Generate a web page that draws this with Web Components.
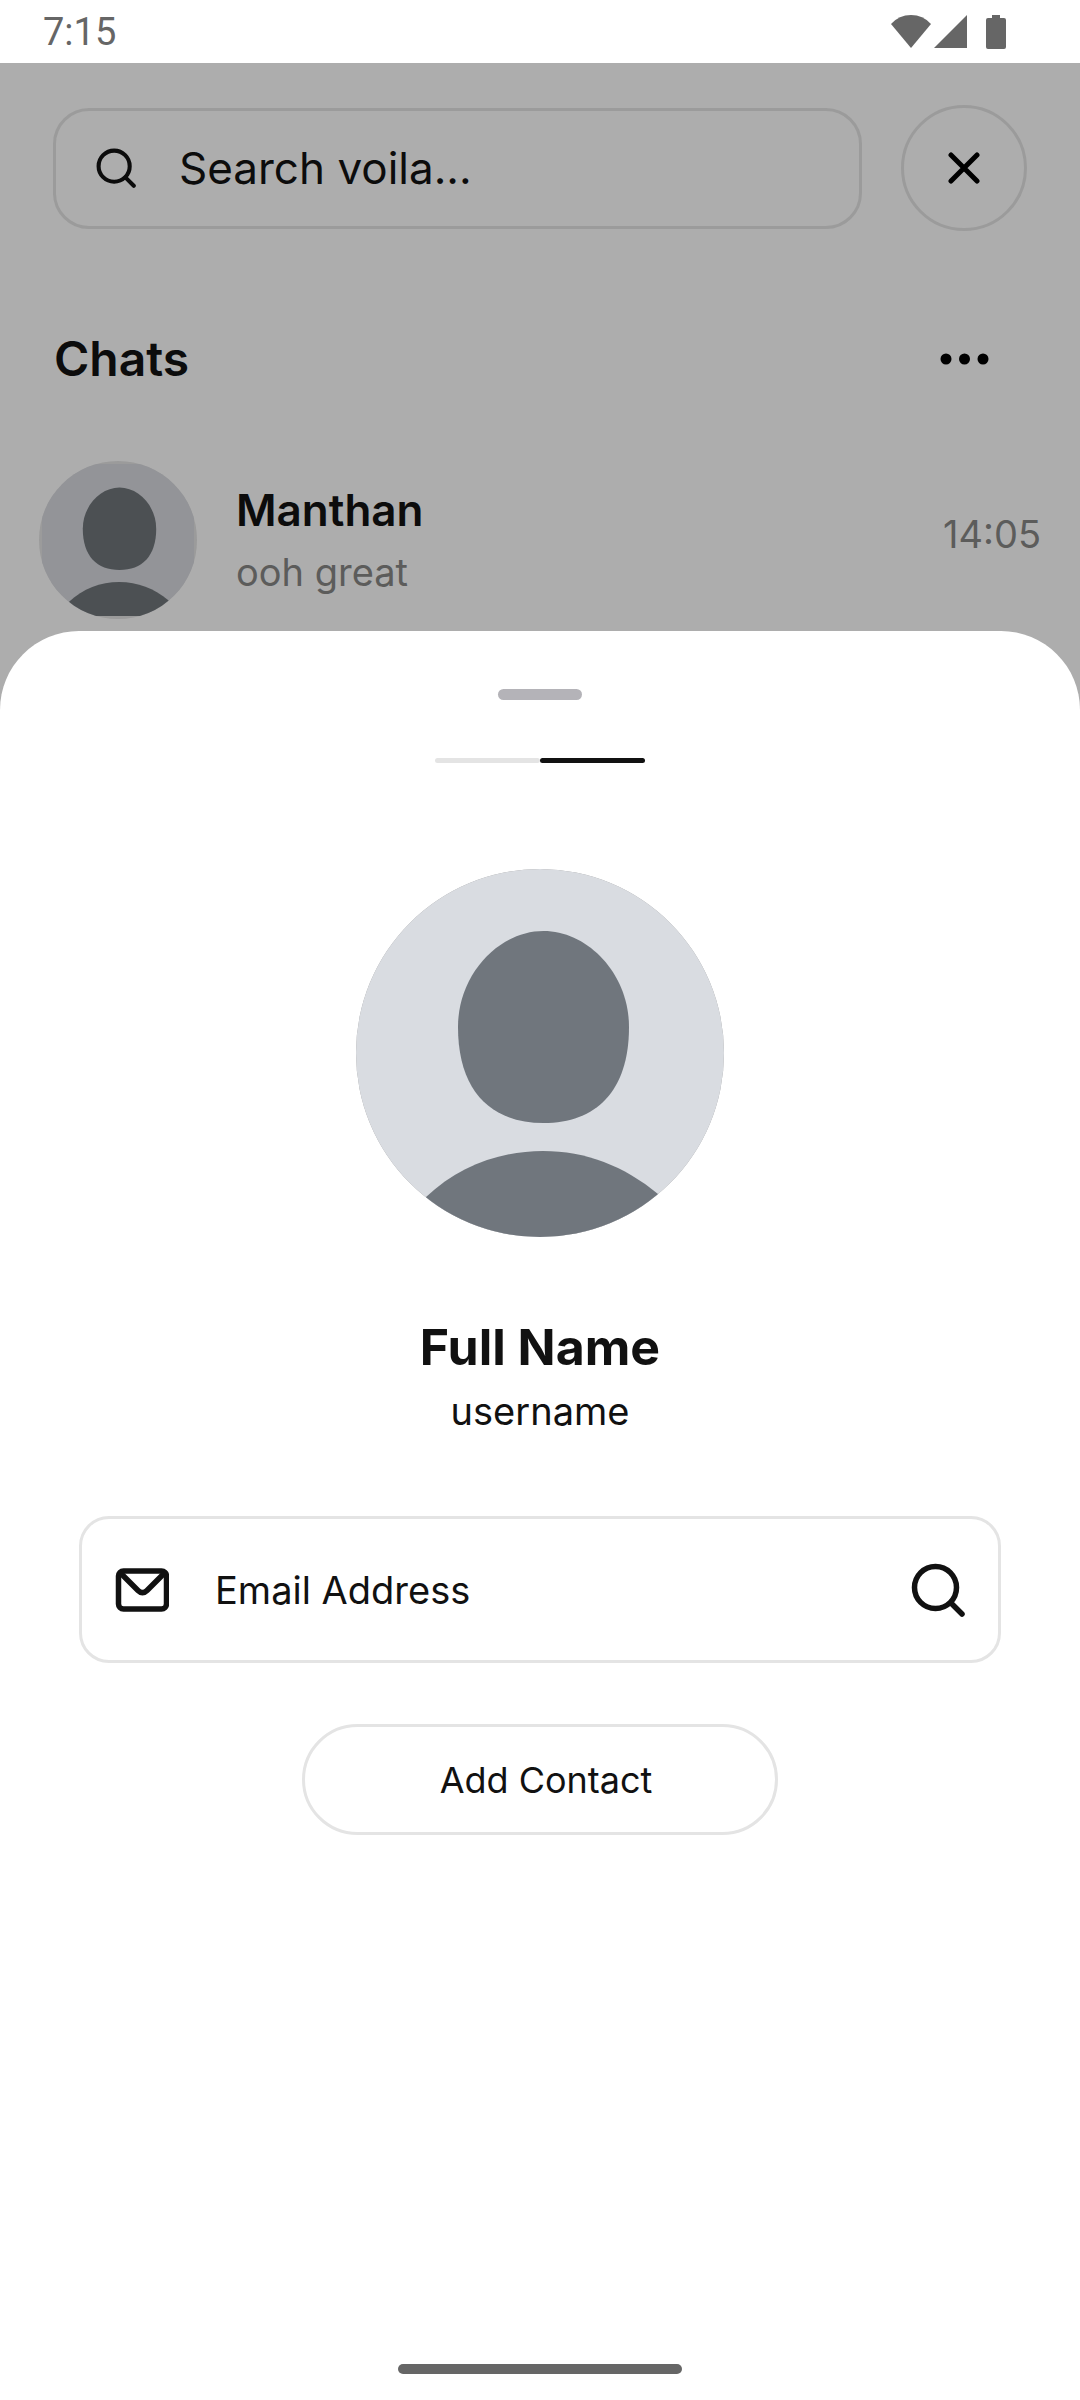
<!DOCTYPE html>
<html lang="en">
<head>
<meta charset="utf-8">
<meta name="viewport" content="width=device-width, initial-scale=1">
<title>Voila chats</title>
<style>
  body { margin: 0; font-family: Inter, "Liberation Sans", sans-serif; color: #111; background: #adadad; }
</style>
</head>
<body>
<voila-app></voila-app>
<script>
const define = (name, html) => {
  const template = document.createElement('template');
  template.innerHTML = html;
  customElements.define(name, class extends HTMLElement {
    constructor() {
      super();
      this.attachShadow({ mode: 'open' }).append(template.content.cloneNode(true));
    }
  });
};

define('status-bar', `
<style>
  :host { display: flex; align-items: center; justify-content: space-between; height: 63px; padding: 0 74px 0 43px; background: #fff; color: #666; box-sizing: border-box; }
  time { font: 38px/60px Roboto, sans-serif; }
  svg { display: block; }
</style>
<time>7:15</time>
<svg width="116" height="36" viewBox="0 0 116 36" fill="#666" aria-hidden="true">
  <path d="M1 10Q9 1 21 1T41 10L21 34Z"/>
  <path d="M44 34L77 1V34Z"/>
  <path d="M102 1h8v3h4q2 0 2 2v27q0 2-2 2h-16q-2 0-2-2v-27q0-2 2-2h4z"/>
</svg>`);

define('search-icon', `
<style>
  :host { display: block; flex: none; width: 40px; height: 40px; }
  svg { display: block; width: 100%; height: 100%; }
</style>
<svg viewBox="0 0 54 54" fill="none" stroke="currentColor" stroke-width="5.500" stroke-linecap="round" aria-hidden="true">
  <circle cx="24.500" cy="24.500" r="21"/><path d="M40 40L51 51"/>
</svg>`);

define('person-avatar', `
<style>
  :host { display: block; flex: none; box-sizing: border-box; border-radius: 50%; overflow: hidden; background: #9b9b9b; color: var(--avatar-fore, #70767d); }
  svg { display: block; width: 100%; height: 100%; background: var(--avatar-back, #d9dce1); clip-path: inset(var(--avatar-ring, 0px)); }
</style>
<svg viewBox="0 0 368 368" fill="currentColor" role="img" aria-label="Profile picture">
  <path d="M187.500 62C232 62 273 105 273 158C273 222 240 254 187.500 254C135 254 102 222 102 158C102 105 143 62 187.500 62Z"/>
  <path d="M70 328C102 298 143 282 187 282C230 282 268 297 302 325L302 368H70Z"/>
</svg>`);

define('search-header', `
<style>
  :host { display: flex; align-items: center; gap: 39px; padding: 42px 53px 0; }
  label { flex: 1; min-width: 0; display: flex; align-items: center; gap: 43px; height: 121px; box-sizing: border-box; padding: 0 40px; border: 3px solid #9b9b9b; border-radius: 36px; color: #0c0c0c; }
  input { flex: 1; min-width: 0; padding: 0; border: 0; outline: 0; background: none; font: inherit; font-size: 44px; line-height: 56px; color: #0c0c0c; }
  input::placeholder { color: #0c0c0c; opacity: 1; }
  button { flex: none; display: grid; place-items: center; width: 126px; height: 126px; padding: 0; border: 3px solid #9b9b9b; border-radius: 50%; background: none; color: #000; }
</style>
<label><search-icon></search-icon><input type="search" aria-label="Search voila" placeholder="Search voila..."></label>
<button type="button" aria-label="Close">
  <svg width="32" height="32" viewBox="0 0 32 32" fill="none" stroke="currentColor" stroke-width="5" stroke-linecap="round"><path d="M3 3L29 29M29 3L3 29"/></svg>
</button>`);

define('section-bar', `
<style>
  :host { display: flex; align-items: center; justify-content: space-between; padding: 98px 91px 72px 54px; }
  h2 { margin: 0; font-size: 48px; line-height: 60px; font-weight: 600; color: #0c0c0c; }
  button { padding: 0; border: 0; background: none; color: #000; }
  svg { display: block; }
</style>
<h2><slot></slot></h2>
<button type="button" aria-label="More options">
  <svg width="50" height="12" viewBox="0 0 50 12" fill="currentColor"><circle cx="7" cy="6" r="5.500"/><circle cx="25.500" cy="6" r="5.500"/><circle cx="44" cy="6" r="5.500"/></svg>
</button>`);

define('chat-row', `
<style>
  :host { display: flex; align-items: center; gap: 39px; padding: 0 39px; }
  person-avatar { width: 158px; height: 158px; --avatar-back: #939498; --avatar-fore: #4c5053; --avatar-ring: 3px; }
  .texts { flex: 1; display: grid; gap: 12px; }
  .name { font-size: 44px; line-height: 52px; font-weight: 600; color: #0c0c0c; }
  .preview, .time { font-size: 38px; line-height: 48px; color: #5c5c5b; }
  .time { padding-bottom: 12px; }
</style>
<person-avatar></person-avatar>
<div class="texts"><div class="name"><slot name="name"></slot></div><div class="preview"><slot></slot></div></div>
<div class="time"><slot name="time"></slot></div>`);

define('step-tabs', `
<style>
  :host { display: flex; }
  i { width: 105px; height: 5px; border-radius: 3px; background: #e4e4e4; }
  i.on { background: #111; }
</style>
<i></i><i class="on"></i>`);

define('email-field', `
<style>
  :host { display: block; }
  label { display: flex; align-items: center; height: 147px; box-sizing: border-box; padding: 0 33px; border: 3px solid #e4e4e4; border-radius: 30px; color: #111; }
  svg { flex: none; display: block; }
  input { flex: 1; min-width: 0; margin: 0 46px; padding: 0; border: 0; outline: 0; background: none; font: inherit; font-size: 38px; line-height: 48px; color: #111; }
  input::placeholder { color: #111; opacity: 1; }
  button { flex: none; padding: 0; border: 0; background: none; color: inherit; }
  search-icon { width: 54px; height: 54px; }
</style>
<label>
  <svg width="54" height="44" viewBox="0 0 54 44" fill="none" stroke="currentColor" stroke-width="5.500" stroke-linejoin="round" aria-hidden="true">
    <rect x="3.500" y="3" width="48" height="38" rx="5"/><path d="M5.500 5L23 22.500Q27.500 27 32 22.500L49.500 5"/>
  </svg>
  <input type="email" aria-label="Email Address" placeholder="Email Address">
  <button type="button" aria-label="Find contact"><search-icon></search-icon></button>
</label>`);

define('pill-button', `
<style>
  :host { display: block; }
  button { width: 476px; max-width: 100%; height: 111px; padding: 0 0 0 12px; border: 3px solid #e4e4e4; border-radius: 56px; background: none; font: inherit; font-size: 36px; line-height: 48px; color: #111; }
</style>
<button type="button"><slot></slot></button>`);

define('contact-sheet', `
<style>
  :host { display: flex; flex-direction: column; align-items: center; box-sizing: border-box; padding: 58px 79px 26px; background: #fff; border-radius: 79px 79px 0 0; }
  .handle { width: 84px; height: 11px; border-radius: 6px; background: #b4b3b8; }
  step-tabs { margin: 58px 0 106px; }
  person-avatar { width: 368px; height: 368px; }
  h1 { margin: 82px 0 12px; font-size: 50px; line-height: 56px; font-weight: 700; }
  p { margin: 0 0 81px; font-size: 38px; line-height: 48px; }
  email-field { align-self: stretch; margin-bottom: 61px; }
  .home { width: 284px; height: 10px; margin-top: auto; border-radius: 5px; background: #666; }
</style>
<div class="handle"></div>
<step-tabs></step-tabs>
<person-avatar></person-avatar>
<h1>Full Name</h1>
<p>username</p>
<email-field></email-field>
<pill-button>Add Contact</pill-button>
<div class="home"></div>`);

define('voila-app', `
<style>
  :host { display: flex; flex-direction: column; min-height: 100vh; }
  chat-row { margin-bottom: 12px; }
  contact-sheet { flex: 1; }
</style>
<status-bar></status-bar>
<search-header></search-header>
<section-bar>Chats</section-bar>
<chat-row><span slot="name">Manthan</span>ooh great<span slot="time">14:05</span></chat-row>
<contact-sheet></contact-sheet>`);
</script>
</body>
</html>
